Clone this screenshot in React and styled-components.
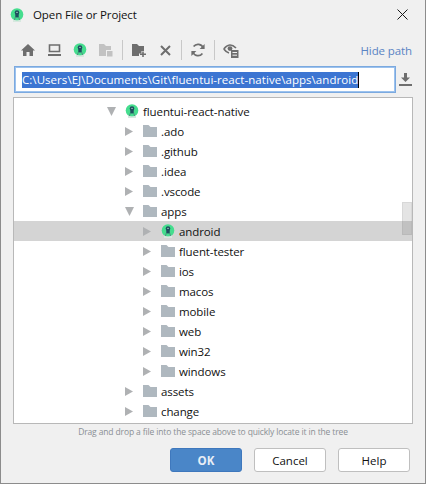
import React from "react";
import styled, { createGlobalStyle } from "styled-components";

const GlobalStyle = createGlobalStyle`
  html, body {
    margin: 0;
    padding: 0;
    background: #f0f0f0;
  }
`;

const treeRows = [
  { name: "fluentui-react-native", level: 0, open: true, project: true },
  { name: ".ado", level: 1 },
  { name: ".github", level: 1 },
  { name: ".idea", level: 1 },
  { name: ".vscode", level: 1 },
  { name: "apps", level: 1, open: true },
  { name: "android", level: 2, project: true, selected: true },
  { name: "fluent-tester", level: 2 },
  { name: "ios", level: 2 },
  { name: "macos", level: 2 },
  { name: "mobile", level: 2 },
  { name: "web", level: 2 },
  { name: "win32", level: 2 },
  { name: "windows", level: 2 },
  { name: "assets", level: 1 },
  { name: "change", level: 1 },
];

const ProjectIcon = ({ size = 14 }) => (
  <svg width={size} height={size} viewBox="0 0 14 14">
    <circle cx="7" cy="6.5" r="6.3" fill="#45dd8e" />
    <circle cx="7" cy="4.6" r="2.3" fill="#1f4e5f" />
    <rect x="5.3" y="5" width="3.4" height="4.4" fill="#1f4e5f" />
    <path d="M5.4 9 4.4 12M8.6 9l1 3" stroke="#4f8f80" strokeWidth="1" />
    <path d="M3 11.5Q7 13.5 11 11.5V14H3Z" fill="#d7e8df" />
    <circle cx="7" cy="4.4" r="0.7" fill="#b9e4cf" />
  </svg>
);

const FolderIcon = () => (
  <svg width="14" height="12" viewBox="0 0 14 12">
    <path d="M0 0H5.5L7.5 2H14V12H0Z" fill="#afb8bf" />
  </svg>
);

const Arrow = ({ open }) => (
  <svg width="9" height="9" viewBox="0 0 9 9">
    {open ? <path d="M0 0H9L4.5 9Z" fill="#afb1b3" /> : <path d="M0 0 8 4.5 0 9Z" fill="#afb1b3" />}
  </svg>
);

const HomeIcon = () => (
  <svg width="14" height="12" viewBox="0 0 14 12">
    <path d="M7 0 14 6.5H12V12H8.5V8H5.5V12H2V6.5H0Z" fill="#6e6e6e" />
  </svg>
);

const DesktopIcon = () => (
  <svg width="13" height="12" viewBox="0 0 13 12">
    <path d="M1.5 1H11.5V7.5H1.5Z" fill="none" stroke="#6e6e6e" strokeWidth="1.6" />
    <rect x="0" y="10" width="13" height="2" fill="#6e6e6e" />
  </svg>
);

const ModuleIcon = () => (
  <svg width="14" height="13" viewBox="0 0 14 13">
    <path d="M0 0H5L7 2H12V6H7V12H0Z" fill="#c2c2c2" />
    <rect x="8" y="7" width="5.5" height="5.5" fill="#c2c2c2" />
  </svg>
);

const NewFolderIcon = () => (
  <svg width="15" height="13" viewBox="0 0 15 13">
    <path d="M0 0H5L7 2H12V7H9.5V9.5H7V12H0Z" fill="#6e6e6e" />
    <path d="M11 7.5V13M8 10.2H14" stroke="#6e6e6e" strokeWidth="1.6" />
  </svg>
);

const CrossIcon = () => (
  <svg width="11" height="11" viewBox="0 0 11 11">
    <path d="M1 1 10 10M10 1 1 10" stroke="#6e6e6e" strokeWidth="2" />
  </svg>
);

const RefreshIcon = () => (
  <svg width="14" height="14" viewBox="0 0 14 14" fill="none">
    <path d="M12.2 5A5.5 5.5 0 0 0 2.6 3.6" stroke="#6e6e6e" strokeWidth="1.7" />
    <path d="M1.8 9A5.5 5.5 0 0 0 11.4 10.4" stroke="#6e6e6e" strokeWidth="1.7" />
    <path d="M8.6 6H13.6V1Z" fill="#6e6e6e" />
    <path d="M5.4 8H.4V13Z" fill="#6e6e6e" />
  </svg>
);

const EyeListIcon = () => (
  <svg width="16" height="15" viewBox="0 0 16 15" fill="none">
    <path d="M.8 6Q6.5-1.5 13 5" stroke="#6e6e6e" strokeWidth="1.7" />
    <path d="M.8 6Q3 9 6 10" stroke="#6e6e6e" strokeWidth="1.7" />
    <circle cx="7" cy="5.6" r="2.4" fill="#6e6e6e" />
    <rect x="8" y="7" width="7.5" height="8" fill="#6e6e6e" />
    <path d="M9.5 9.5H14M9.5 12.2H14" stroke="#f0f0f0" />
  </svg>
);

const DownloadIcon = () => (
  <svg width="13" height="13" viewBox="0 0 13 13">
    <path d="M5 0H8V4.5H11L6.5 9 2 4.5H5Z" fill="#6e6e6e" />
    <rect x="0" y="11" width="13" height="2" fill="#6e6e6e" />
  </svg>
);

const CloseIcon = () => (
  <svg width="11" height="11" viewBox="0 0 11 11">
    <path d="M.5.5 10.5 10.5M10.5.5.5 10.5" stroke="#1a1a1a" strokeWidth="1" />
  </svg>
);

const Dialog = styled.div`
  box-sizing: border-box;
  width: 426px;
  height: 484px;
  background: #f0f0f0;
  border: solid #8c8c8c;
  border-width: 0 1px 1px 1px;
  font-family: "Open Sans", "Noto Sans", sans-serif;
  font-size: 11.5px;
  letter-spacing: -0.1px;
  color: #111;
  display: flex;
  flex-direction: column;
`;

const TitleBar = styled.div`
  height: 29px;
  display: flex;
  align-items: center;
  padding: 0 17px 0 9px;
  gap: 9px;
`;

const Title = styled.span`
  flex: 1;
`;

const Toolbar = styled.div`
  height: 32px;
  margin: 5px 0 0;
  padding: 0 13px 0 14px;
  display: flex;
  align-items: center;
  box-sizing: border-box;
`;

const ToolButton = styled.span`
  width: 26px;
  display: flex;
  justify-content: center;
  align-items: center;
`;

const Divider = styled.span`
  width: 1px;
  height: 20px;
  background: #c8c8c8;
  margin: 0 3px;
`;

const HidePath = styled.span`
  margin-left: auto;
  color: #5a84c4;
`;

const PathRow = styled.div`
  display: flex;
  align-items: center;
  padding: 0 13px;
  gap: 3px;
`;

const PathInput = styled.div`
  box-sizing: border-box;
  width: 382px;
  height: 27px;
  background: #fff;
  border: 2px solid #9cc2ee;
  outline: 1px solid #7ba9df;
  outline-offset: -1px;
  padding: 4px 0 0 6px;
  display: flex;
`;

const PathText = styled.span`
  background: #3c75d2;
  color: #fff;
  height: 16px;
  line-height: 16px;
  letter-spacing: 0.05px;
  border-right: 1px solid #000;
  white-space: nowrap;
`;

const Tree = styled.div`
  position: relative;
  box-sizing: border-box;
  width: 400px;
  height: 327px;
  margin: 4px 0 0 12px;
  background: #fff;
  border: 1px solid #b8b8b8;
  padding-top: 3px;
  overflow: hidden;
`;

const Row = styled.div`
  height: 20px;
  display: flex;
  align-items: center;
  padding-left: ${(p) => 93 + p.$level * 18}px;
  background: ${(p) => (p.$selected ? "#d4d4d4" : "transparent")};
`;

const ArrowSlot = styled.span`
  width: 18px;
  display: flex;
  align-items: center;
`;

const IconSlot = styled.span`
  width: 18px;
  display: flex;
  align-items: center;
`;

const Thumb = styled.div`
  position: absolute;
  top: 104px;
  right: 0;
  width: 10px;
  height: 33px;
  background: rgba(120, 120, 120, 0.2);
  border: 1px solid rgba(120, 120, 120, 0.1);
  box-sizing: border-box;
`;

const Hint = styled.div`
  text-align: center;
  font-size: 8.5px;
  letter-spacing: -0.13px;
  color: #8a8f94;
  height: 20px;
  line-height: 15px;
  box-sizing: border-box;
`;

const Footer = styled.div`
  display: flex;
  justify-content: flex-end;
  gap: 12px;
  padding: 4px 15px 0 0;
`;

const Button = styled.button`
  box-sizing: border-box;
  width: 72px;
  height: 24px;
  padding: 0;
  font-family: inherit;
  font-size: 11.5px;
  border-radius: 3px;
  border: 1px solid ${(p) => (p.$primary ? "#3f78bd" : "#bfbfbf")};
  background: ${(p) => (p.$primary ? "#4a86c8" : "#fff")};
  color: ${(p) => (p.$primary ? "#e8eef6" : "#111")};
  font-weight: ${(p) => (p.$primary ? 700 : 400)};
`;

export default function App() {
  return (
    <Dialog>
      <GlobalStyle />
      <TitleBar>
        <ProjectIcon />
        <Title>Open File or Project</Title>
        <CloseIcon />
      </TitleBar>
      <Toolbar>
        <ToolButton><HomeIcon /></ToolButton>
        <ToolButton><DesktopIcon /></ToolButton>
        <ToolButton><ProjectIcon /></ToolButton>
        <ToolButton><ModuleIcon /></ToolButton>
        <Divider />
        <ToolButton><NewFolderIcon /></ToolButton>
        <ToolButton><CrossIcon /></ToolButton>
        <Divider />
        <ToolButton><RefreshIcon /></ToolButton>
        <Divider />
        <ToolButton><EyeListIcon /></ToolButton>
        <HidePath>Hide path</HidePath>
      </Toolbar>
      <PathRow>
        <PathInput>
          <PathText>C:\Users\EJ\Documents\Git\fluentui-react-native\apps\android</PathText>
        </PathInput>
        <DownloadIcon />
      </PathRow>
      <Tree>
        {treeRows.map((row) => (
          <Row key={row.name} $level={row.level} $selected={row.selected}>
            <ArrowSlot><Arrow open={row.open} /></ArrowSlot>
            <IconSlot>{row.project ? <ProjectIcon /> : <FolderIcon />}</IconSlot>
            {row.name}
          </Row>
        ))}
        <Thumb />
      </Tree>
      <Hint>Drag and drop a file into the space above to quickly locate it in the tree</Hint>
      <Footer>
        <Button $primary>OK</Button>
        <Button>Cancel</Button>
        <Button>Help</Button>
      </Footer>
    </Dialog>
  );
}
